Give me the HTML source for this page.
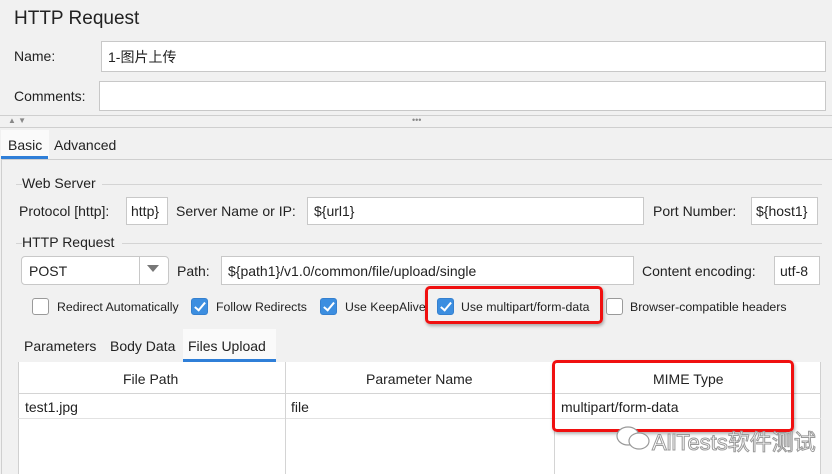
<!DOCTYPE html>
<html><head><meta charset="utf-8"><style>
*{box-sizing:border-box;margin:0;padding:0}
body{width:832px;height:474px;background:#f1f1f1;font-family:"Liberation Sans","Noto Sans CJK SC",sans-serif;font-size:14px;color:#222;position:relative;overflow:hidden}
.a{position:absolute;white-space:nowrap}
.in{position:absolute;background:#fff;border:1px solid #c8c8c8;padding-left:6px;display:flex;align-items:center;font-size:14px}
.hl{position:absolute;height:1px;background:#d4d4d4}
.cb{position:absolute;width:17px;height:17px;border-radius:3px}
.off{background:#fff;border:1px solid #9a9a9a}
.on{background:#3c8ee0;border:1px solid #3580cf}
.on:after{content:"";position:absolute;left:5px;top:1px;width:4px;height:9px;border:solid #fff;border-width:0 2px 2px 0;transform:rotate(40deg)}
.lab{font-size:12.3px}
.red{position:absolute;border:3px solid #f01010;border-radius:5px;box-shadow:1px 2px 3px rgba(0,0,0,.3)}
</style></head><body>
<div class="a" style="left:14px;top:8px;font-size:19px">HTTP Request</div>
<div class="a" style="left:14px;top:48px">Name:</div>
<div class="in" style="left:101px;top:41px;width:725px;height:31px">1-图片上传</div>
<div class="a" style="left:14px;top:88px">Comments:</div>
<div class="in" style="left:99px;top:81px;width:727px;height:30px"></div>
<div class="hl" style="left:0;top:115px;width:832px;background:#cfcfcf"></div>
<div class="a" style="left:8px;top:116px;font-size:8px;color:#888">▲ ▼</div>
<div class="a" style="left:412px;top:115px;font-size:9px;color:#888">•••</div>
<div class="hl" style="left:0;top:127px;width:832px;background:#cfcfcf"></div>
<div class="a" style="left:1px;top:130px;width:48px;height:28px;background:#fafafa"></div>
<div class="a" style="left:8px;top:137px">Basic</div>
<div class="a" style="left:1px;top:156px;width:47px;height:3px;background:#2f7fd8"></div>
<div class="a" style="left:54px;top:137px">Advanced</div>
<div class="hl" style="left:1px;top:159px;width:831px;background:#cfcfcf"></div>
<div class="a" style="left:1px;top:160px;width:1px;height:314px;background:#cfcfcf"></div>
<div class="hl" style="left:16px;top:184px;width:6px"></div>
<div class="a" style="left:22px;top:175px">Web Server</div>
<div class="hl" style="left:102px;top:184px;width:720px"></div>
<div class="a" style="left:19px;top:203px">Protocol [http]:</div>
<div class="in" style="left:126px;top:197px;width:42px;height:28px;padding-left:4px">http}</div>
<div class="a" style="left:176px;top:203px">Server Name or IP:</div>
<div class="in" style="left:307px;top:197px;width:337px;height:28px">${url1}</div>
<div class="a" style="left:653px;top:203px">Port Number:</div>
<div class="in" style="left:751px;top:197px;width:67px;height:28px;padding-left:4px">${host1}</div>
<div class="hl" style="left:16px;top:243px;width:6px"></div>
<div class="a" style="left:22px;top:234px">HTTP Request</div>
<div class="hl" style="left:122px;top:243px;width:700px"></div>
<div class="in" style="left:21px;top:256px;width:148px;height:29px;border-radius:4px;padding-left:7px">POST</div>
<div class="a" style="left:139px;top:256px;width:1px;height:29px;background:#c8c8c8"></div>
<div class="a" style="left:147px;top:265px;width:0;height:0;border-left:6px solid transparent;border-right:6px solid transparent;border-top:7px solid #777"></div>
<div class="a" style="left:177px;top:263px">Path:</div>
<div class="in" style="left:221px;top:256px;width:413px;height:29px">${path1}/v1.0/common/file/upload/single</div>
<div class="a" style="left:642px;top:263px">Content encoding:</div>
<div class="in" style="left:774px;top:256px;width:46px;height:29px;padding-left:5px">utf-8</div>
<div class="cb off" style="left:32px;top:298px"></div><div class="a lab" style="left:57px;top:300px">Redirect Automatically</div>
<div class="cb on" style="left:191px;top:298px"></div><div class="a lab" style="left:216px;top:300px">Follow Redirects</div>
<div class="cb on" style="left:320px;top:298px"></div><div class="a lab" style="left:345px;top:300px">Use KeepAlive</div>
<div class="cb on" style="left:437px;top:298px"></div><div class="a lab" style="left:461px;top:300px">Use multipart/form-data</div>
<div class="cb off" style="left:606px;top:298px"></div><div class="a lab" style="left:630px;top:300px">Browser-compatible headers</div>
<div class="red" style="left:425px;top:286px;width:178px;height:38px"></div>
<div class="a" style="left:183px;top:329px;width:93px;height:32px;background:#fafafa"></div>
<div class="a" style="left:24px;top:338px">Parameters</div>
<div class="a" style="left:110px;top:338px">Body Data</div>
<div class="a" style="left:188px;top:338px">Files Upload</div>
<div class="a" style="left:183px;top:359px;width:93px;height:3px;background:#2f7fd8"></div>
<div class="a" style="left:18px;top:362px;width:803px;height:112px;background:#fff;border-left:1px solid #d0d0d0;border-right:1px solid #d0d0d0"></div>
<div class="hl" style="left:18px;top:393px;width:803px"></div>
<div class="hl" style="left:18px;top:418px;width:803px;background:#e2e2e2"></div>
<div class="a" style="left:285px;top:362px;width:1px;height:112px;background:#d4d4d4"></div>
<div class="a" style="left:554px;top:362px;width:1px;height:112px;background:#d4d4d4"></div>
<div class="a" style="left:123px;top:371px">File Path</div>
<div class="a" style="left:366px;top:371px">Parameter Name</div>
<div class="a" style="left:653px;top:371px">MIME Type</div>
<div class="a" style="left:25px;top:399px">test1.jpg</div>
<div class="a" style="left:291px;top:399px">file</div>
<div class="a" style="left:561px;top:399px">multipart/form-data</div>
<div class="red" style="left:552px;top:360px;width:242px;height:72px"></div>
<svg class="a" style="left:615px;top:425px" width="36" height="26" viewBox="0 0 36 26"><ellipse cx="13" cy="11" rx="11" ry="9" fill="#fff" stroke="#999" stroke-width="1.2"/><ellipse cx="24" cy="16" rx="10" ry="8" fill="#fff" stroke="#999" stroke-width="1.2"/></svg>
<div class="a" style="left:652px;top:425px;font-size:22px;color:#fff;-webkit-text-stroke:1px #999">AllTests软件测试</div>
</body></html>
